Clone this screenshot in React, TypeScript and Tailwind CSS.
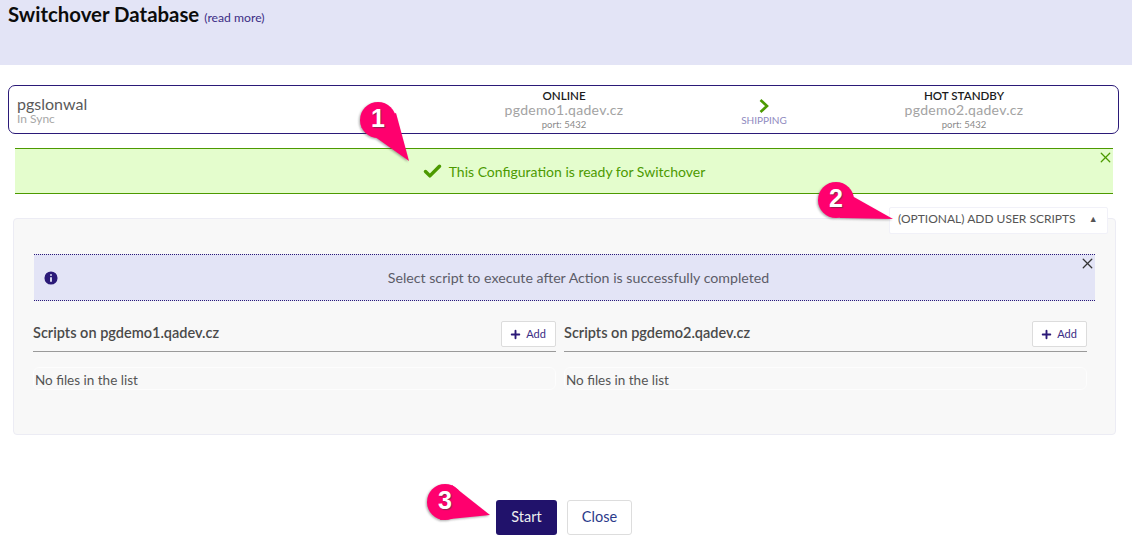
import React from "react";
import { Check, Info, Plus, X } from "lucide-react";

interface NodeProps {
  role: string;
  host: string;
}

const NodeInfo = ({ role, host }: NodeProps) => (
  <div className="w-[200px] flex flex-col items-center pt-[1px]">
    <span className="text-[11.6px] leading-[13px] font-semibold text-[#1c1c1c]">{role}</span>
    <span className="text-[14px] leading-[16px] text-[#a3a3a3] tracking-[0.3px]">{host}</span>
    <span className="text-[9.5px] leading-[14px] text-[#8a8a8a]">port: 5432</span>
  </div>
);

interface ScriptsProps {
  host: string;
}

const ScriptsColumn = ({ host }: ScriptsProps) => (
  <div className="w-[523px]">
    <div className="h-[31px] flex items-start justify-between border-b border-[#9a9a9a]">
      <span className="text-[14.5px] leading-[24px] font-semibold text-[#4a4a4a]">Scripts on {host}</span>
      <button className="w-[55px] h-[26px] bg-white border border-[#dcdcdc] rounded-[2px] flex items-center justify-center gap-[4px] pr-[2px]">
        <Plus size={13} strokeWidth={3.5} className="text-[#2b1a78]" />
        <span className="text-[11px] text-[#3b2d85]">Add</span>
      </button>
    </div>
    <div className="mt-[15px] h-[23px] flex items-end border border-[#fdfdfd] rounded-[6px] pl-[1px] text-[13.5px] leading-[17px] text-[#555555]">
      No files in the list
    </div>
  </div>
);

// pink numbered pointer drawn over the page
const Callout = ({ n, d, cx, cy }: { n: string; d: string; cx: number; cy: number }) => (
  <div className="absolute left-0 top-0">
    <svg width="80" height="80" className="absolute left-0 top-0 overflow-visible drop-shadow-[-1px_1px_1px_rgba(70,70,70,0.45)]">
      <circle cx={cx} cy={cy} r="18" fill="#ff006e" />
      <path d={d} fill="#ff006e" />
    </svg>
    <span
      className="absolute w-[24px] text-center text-[25px] leading-[28px] font-bold text-white font-['Liberation_Sans',sans-serif] [text-shadow:1px_1px_1px_rgba(60,60,60,0.6)]"
      style={{ left: cx - 12, top: cy - 16 }}
    >
      {n}
    </span>
  </div>
);

export default function App() {
  return (
    <div className="relative h-[547px] w-[1132px] overflow-hidden bg-white font-['Lato',sans-serif]">
      <div className="h-[65px] bg-[#e3e4f6] pl-2">
        <span className="text-[20.4px] leading-[28px] font-bold text-[#0c0c0c]">Switchover Database</span>
        <span className="ml-[5px] text-[12.2px] text-[#3b2d85]">(read more)</span>
      </div>

      <div className="mx-2 mt-5 h-[49px] w-[1111px] border border-[#2b1a78] rounded-[7px] flex items-center pl-2 pr-[54px]">
        <div className="flex-1 flex flex-col pb-[1px]">
          <span className="text-[16px] leading-[18px] text-[#5a5a5a]">pgslonwal</span>
          <span className="text-[12px] leading-[11px] text-[#a8a8a8]">In Sync</span>
        </div>
        <NodeInfo role="ONLINE" host="pgdemo1.qadev.cz" />
        <div className="w-[200px] flex flex-col items-center pt-[6px]">
          <svg width="10" height="14" viewBox="0 0 10 14" fill="none" stroke="#4c9a00" strokeWidth="2.6">
            <path d="M1.5 1 L8 7 L1.5 13" />
          </svg>
          <span className="mt-[1px] text-[10px] leading-[12px] text-[#8f8ac0]">SHIPPING</span>
        </div>
        <NodeInfo role="HOT STANDBY" host="pgdemo2.qadev.cz" />
      </div>

      <div className="relative ml-[15px] mt-[14px] h-[46px] w-[1098px] bg-[#e4fdcd] border-y border-[#4c9a00] flex items-center justify-center gap-[6px] pt-[1px] pr-[1px] text-[14px] text-[#4c9a00]">
        <Check size={21} strokeWidth={4} />
        <span>This Configuration is ready for Switchover</span>
        <X size={17} strokeWidth={1.8} className="absolute right-[-1px] top-[0px]" />
      </div>

      <div className="relative ml-[13px] mt-[24px] h-[217px] w-[1103px] bg-[#f8f8f8] border border-[#ececf4] rounded-[4px] pl-[20px] pr-[20px] pt-[35px]">
        <div className="absolute right-[7px] top-[-12px] h-[27px] w-[219px] bg-white border border-[#f1f1f8] rounded-[2px] flex items-center pl-[8px] pb-[3px] gap-[13px] text-[12px] text-[#555555]">
          <span>(OPTIONAL) ADD USER SCRIPTS</span>
          <span className="text-[9px] text-[#555555]">▲</span>
        </div>

        <div className="relative h-[47px] w-[1061px] bg-[#e3e4f6] border-y border-dotted border-[#2b1a78] flex items-center justify-center pl-[28px] pt-[1px] text-[14.2px] text-[#5c5c68]">
          <Info size={18} fill="#2b1a78" stroke="#e3e4f6" strokeWidth={2.5} className="absolute left-[8px] top-[14px]" />
          <span>Select script to execute after Action is successfully completed</span>
          <X size={17} strokeWidth={1.8} className="absolute right-[-1px] top-[0px] text-[#333333]" />
        </div>

        <div className="mt-[20px] flex gap-[8px] -ml-[1px]">
          <ScriptsColumn host="pgdemo1.qadev.cz" />
          <ScriptsColumn host="pgdemo2.qadev.cz" />
        </div>
      </div>

      <div className="mt-[65px] flex justify-center gap-[10px] pr-[4px]">
        <button className="h-[35px] w-[61px] bg-[#21126b] rounded-[3px] pb-[2px] text-[14.5px] text-[#eeeeee]">Start</button>
        <button className="h-[35px] w-[65px] bg-white border border-[#dddddd] rounded-[3px] pb-[2px] text-[14.5px] text-[#2b3a8a]">Close</button>
      </div>

      <Callout n="1" cx={378} cy={120} d="M361 127 L396 113 L409 161 Z" />
      <Callout n="2" cx={836} cy={200} d="M829 183 L840 218 L893 219 Z" />
      <Callout n="3" cx={445} cy={502} d="M452 485 L440 520 L490 515 Z" />
    </div>
  );
}
